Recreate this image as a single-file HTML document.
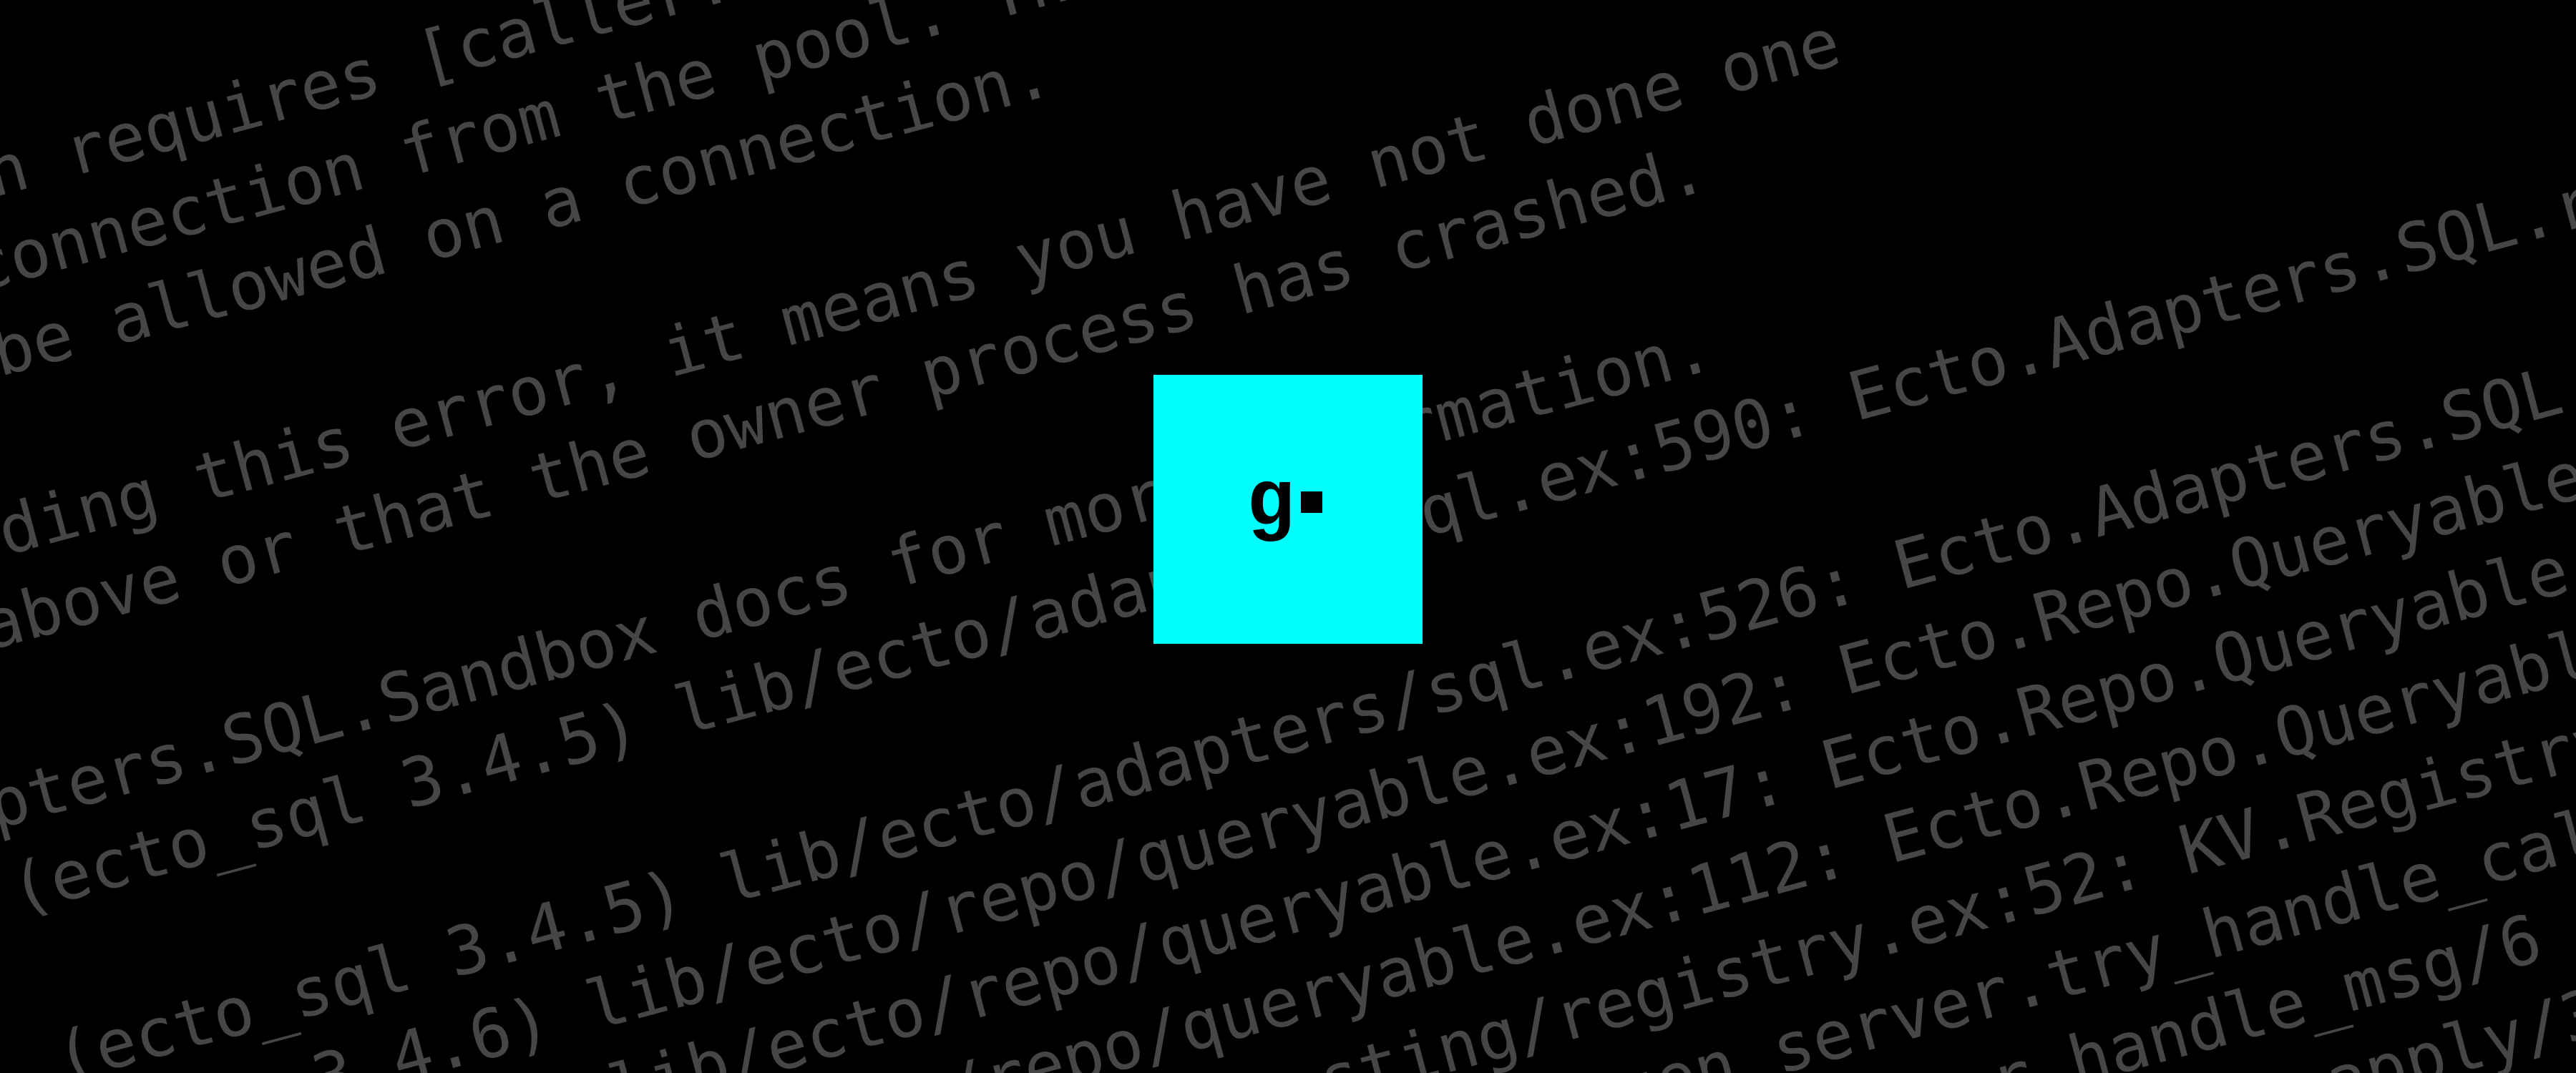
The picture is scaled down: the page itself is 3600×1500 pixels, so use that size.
<!DOCTYPE html>
<html><head><meta charset="utf-8"><style>
html,body{margin:0;padding:0;background:#000;width:3600px;height:1500px;overflow:hidden;position:relative}
pre{position:absolute;left:-1034px;top:-50px;margin:0;transform-origin:0 0;transform:rotate(-15deg);
font-family:"DejaVu Sans Mono","Liberation Mono",monospace;font-size:94px;line-height:122px;color:#464646;white-space:pre}
.box{position:absolute;left:1612px;top:524px;width:376px;height:376px;background:#00ffff}
.g{position:absolute;left:1742px;top:648px;font-family:"Liberation Mono",monospace;font-weight:bold;font-size:112px;line-height:112px;color:#000}
.sq{position:absolute;left:1818px;top:687px;width:30px;height:30px;background:#000}
</style></head><body>
<pre>The third option requires a {:shared, pid} mode to be set.
If using shared mode in tests, make sure your tests are not
async.

The fourth option requires [caller: pid] to be used when
checking out a connection from the pool. The caller process
should already be allowed on a connection.

If you are reading this error, it means you have not done one
of the steps above or that the owner process has crashed.

See Ecto.Adapters.SQL.Sandbox docs for more information.
            (ecto_sql 3.4.5) lib/ecto/adapters/sql.ex:590: Ecto.Adapters.SQL.raise_sql_call_error/1

            (ecto_sql 3.4.5) lib/ecto/adapters/sql.ex:526: Ecto.Adapters.SQL.execute/5
            (ecto 3.4.6) lib/ecto/repo/queryable.ex:192: Ecto.Repo.Queryable.execute/4
            (ecto 3.4.6) lib/ecto/repo/queryable.ex:17: Ecto.Repo.Queryable.all/3
            (ecto 3.4.6) lib/ecto/repo/queryable.ex:112: Ecto.Repo.Queryable.one/3
            (kv 0.1.0) lib/kv/kv_server testing/registry.ex:52: KV.Registry.handle_call/3
            (stdlib 3.13.1) gen_server.erl:680: :gen_server.try_handle_call/4
            (stdlib 3.13.1) gen_server.erl:706: :gen_server.handle_msg/6
            (stdlib 3.13.1) proc_lib.erl:226: :proc_lib.init_p_do_apply/3</pre>
<div class="box"></div>
<div class="g">g</div>
<div class="sq"></div>
</body></html>
